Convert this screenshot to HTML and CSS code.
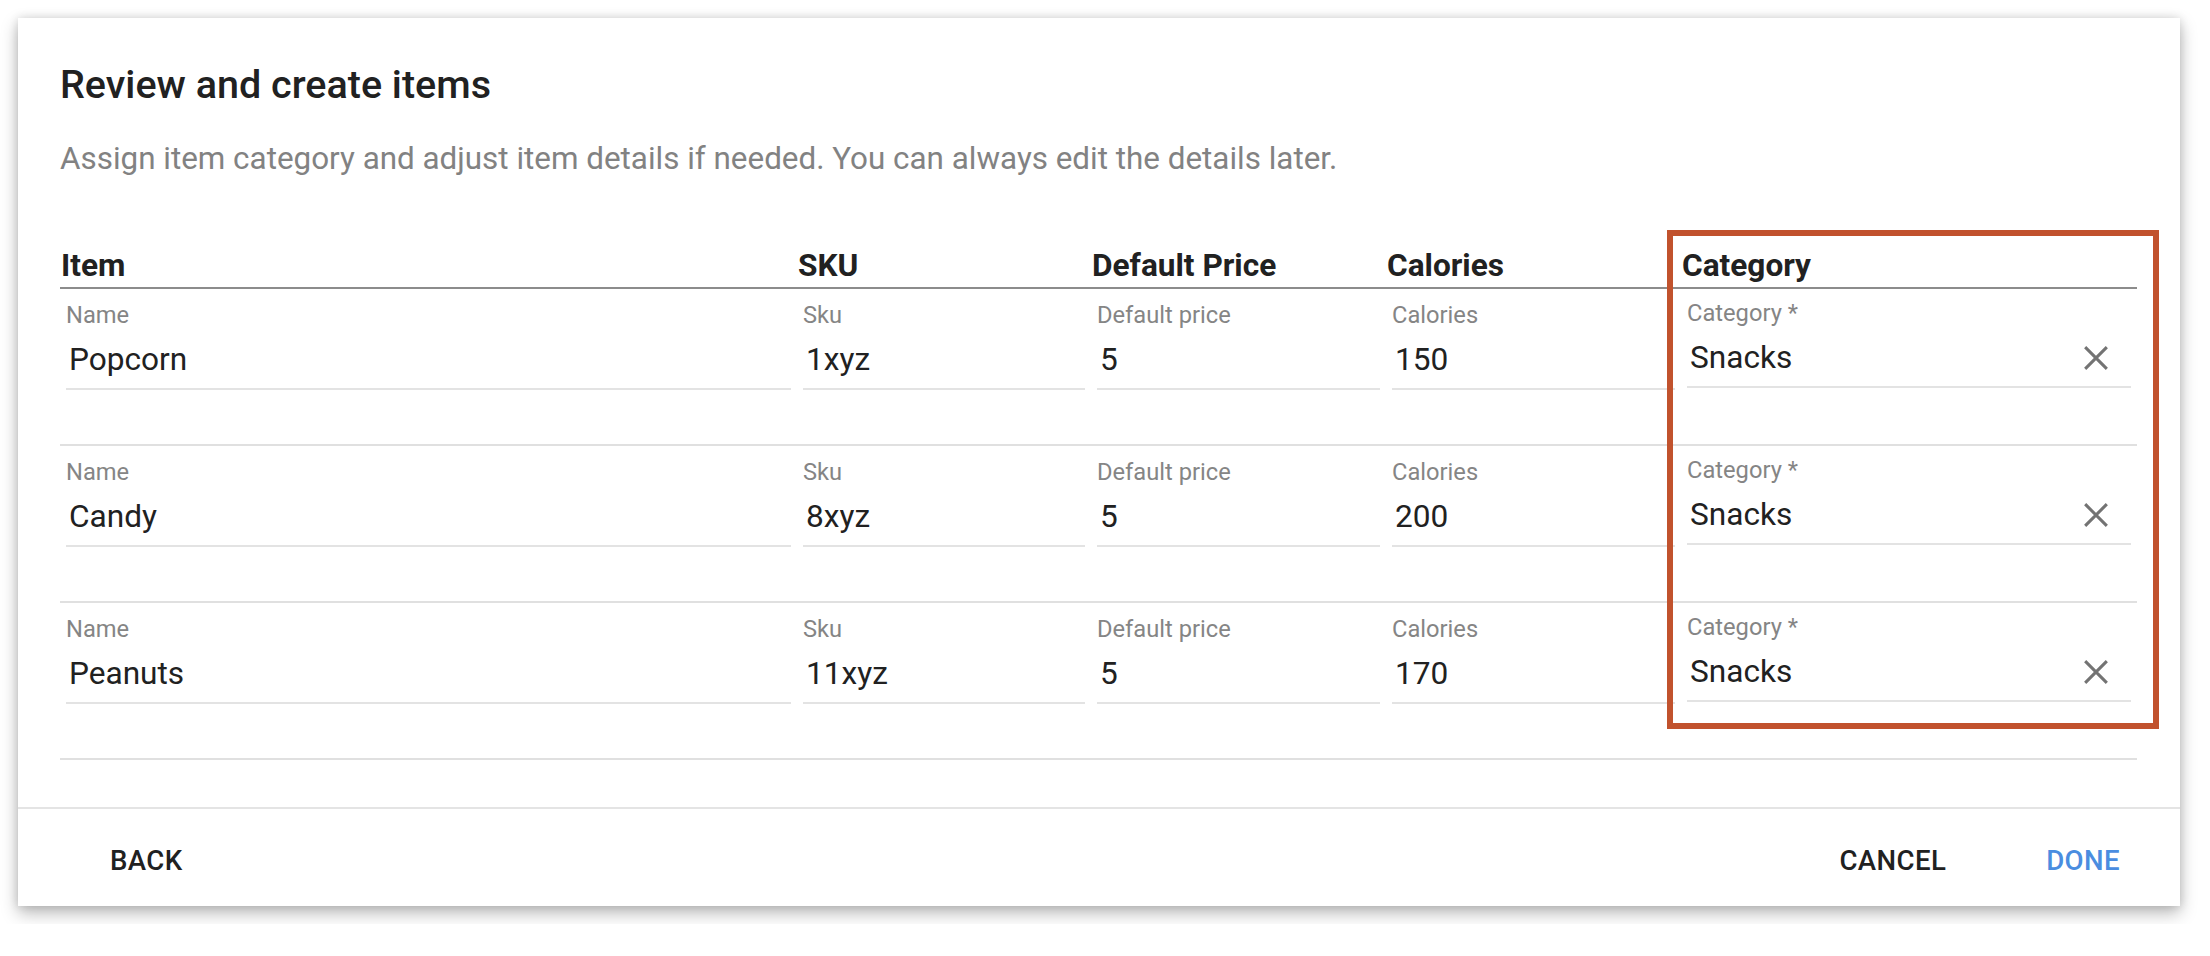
FILE: index.html
```html
<!DOCTYPE html>
<html lang="en">
<head>
<meta charset="utf-8">
<title>Review and create items</title>
<link rel="stylesheet" href="styles.css">
</head>
<body>
<div class="page">
  <div class="dialog">
    <div class="dialog-body">
      <h2 class="title">Review and create items</h2>
      <p class="subtitle">Assign item category and adjust item details if needed. You can always edit the details later.</p>
      <div class="table">
        <div class="thead">
          <div class="th">Item</div>
          <div class="th">SKU</div>
          <div class="th">Default Price</div>
          <div class="th">Calories</div>
          <div class="th">Category</div>
        </div>

        <div class="row">
          <div class="field"><div class="label">Name</div><div class="value">Popcorn</div></div>
          <div class="field"><div class="label">Sku</div><div class="value">1xyz</div></div>
          <div class="field"><div class="label">Default price</div><div class="value">5</div></div>
          <div class="field"><div class="label">Calories</div><div class="value">150</div></div>
          <div class="field cat"><div class="label">Category *</div><div class="value"><span>Snacks</span><svg class="clear" viewBox="0 0 24 24"><path d="M2 2 L22 22 M22 2 L2 22"/></svg></div></div>
        </div>

        <div class="row">
          <div class="field"><div class="label">Name</div><div class="value">Candy</div></div>
          <div class="field"><div class="label">Sku</div><div class="value">8xyz</div></div>
          <div class="field"><div class="label">Default price</div><div class="value">5</div></div>
          <div class="field"><div class="label">Calories</div><div class="value">200</div></div>
          <div class="field cat"><div class="label">Category *</div><div class="value"><span>Snacks</span><svg class="clear" viewBox="0 0 24 24"><path d="M2 2 L22 22 M22 2 L2 22"/></svg></div></div>
        </div>

        <div class="row">
          <div class="field"><div class="label">Name</div><div class="value">Peanuts</div></div>
          <div class="field"><div class="label">Sku</div><div class="value">11xyz</div></div>
          <div class="field"><div class="label">Default price</div><div class="value">5</div></div>
          <div class="field"><div class="label">Calories</div><div class="value">170</div></div>
          <div class="field cat"><div class="label">Category *</div><div class="value"><span>Snacks</span><svg class="clear" viewBox="0 0 24 24"><path d="M2 2 L22 22 M22 2 L2 22"/></svg></div></div>
        </div>
      </div>
    </div>
    <div class="dialog-actions">
      <span class="btn back">BACK</span>
      <span class="btn">CANCEL</span>
      <span class="btn primary">DONE</span>
    </div>
    <div class="highlight"></div>
  </div>
</div>
</body>
</html>
```

FILE: styles.css
```css
* { box-sizing: border-box; }

html, body {
  margin: 0;
  padding: 0;
  background: #ffffff;
  font-family: Roboto, "Liberation Sans", Arial, sans-serif;
  color: #212121;
}

.page {
  padding: 18px;
}

.dialog {
  position: relative;
  width: 2162px;
  background: #ffffff;
  box-shadow: 0 7px 16px rgba(0, 0, 0, 0.28), 0 0 9px rgba(0, 0, 0, 0.12);
}

.dialog-body {
  padding: 47px 43px 47px 42px;
}

.title {
  margin: 0;
  font-size: 39.5px;
  line-height: 40px;
  font-weight: 500;
  color: #212121;
}

.subtitle {
  margin: 36px 0 0;
  font-size: 31.4px;
  line-height: 36px;
  font-weight: 400;
  color: #828282;
}

.table {
  margin-top: 71px;
}

.thead,
.row {
  display: grid;
  grid-template-columns: 737px 294px 295px 295px 456px;
}

.thead {
  border-bottom: 2px solid #8c8c8c;
  padding-bottom: 3px;
}

.th {
  padding-left: 1px;
  font-size: 31.6px;
  line-height: 36px;
  font-weight: 700;
  color: #212121;
}

.row {
  padding: 14px 0 54px;
  border-bottom: 2px solid #e0e0e0;
}

.field {
  margin: 0 6px;
  border-bottom: 2px solid #e3e3e3;
  padding-bottom: 10px;
}

.field.cat {
  margin-top: -2px;
  margin-bottom: 2px;
}

.label {
  height: 24px;
  font-size: 23.7px;
  line-height: 24px;
  color: #858585;
  white-space: nowrap;
}

.value {
  height: 36px;
  margin-top: 15px;
  padding-left: 3px;
  font-size: 31.6px;
  line-height: 36px;
  color: #212121;
}

.field.cat .value {
  display: flex;
  align-items: center;
  justify-content: space-between;
}

.clear {
  width: 26px;
  height: 26px;
  margin-right: 22px;
  stroke: #737373;
  stroke-width: 2.8;
  fill: none;
}

.dialog-actions {
  display: flex;
  align-items: center;
  gap: 100px;
  border-top: 2px solid #e4e4e4;
  padding: 34px 60px 27px 92px;
}

.btn {
  font-size: 27.6px;
  line-height: 36px;
  font-weight: 500;
  letter-spacing: 0.4px;
  color: #212121;
}

.btn.back {
  margin-right: auto;
}

.btn.primary {
  color: #4a8de0;
}

.highlight {
  position: absolute;
  left: 1649px;
  top: 212px;
  width: 492px;
  height: 499px;
  border: 6px solid #c1522d;
  pointer-events: none;
}
```
